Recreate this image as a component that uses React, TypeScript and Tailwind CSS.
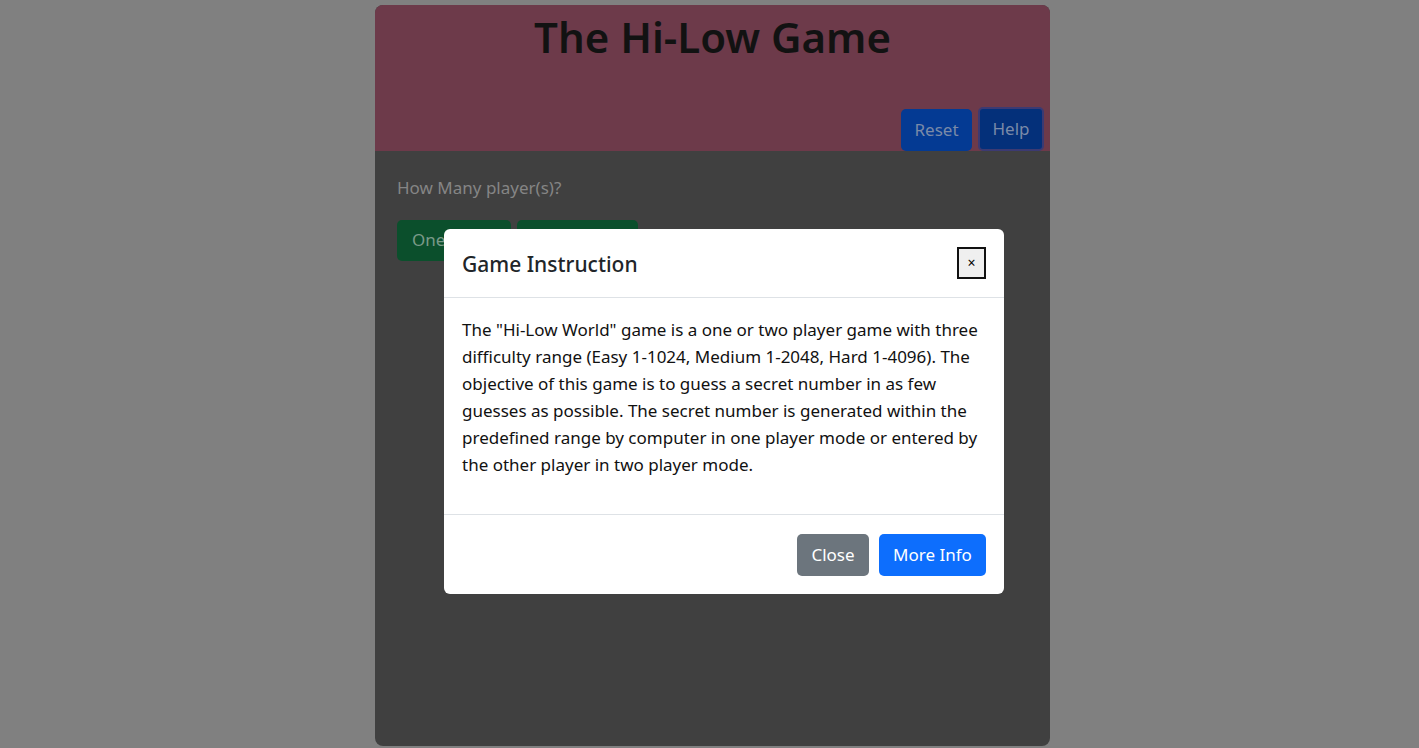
export default function App() {
  const font = { fontFamily: '"Noto Sans", "Open Sans", sans-serif' };
  return (
    <div className="min-h-screen w-full bg-[#808080]" style={font}>
      <div className="ml-[375px] w-[675px] pt-[5px]">
        <div className="flex h-[741px] flex-col overflow-hidden rounded-lg bg-[#404040]">
          {/* header */}
          <div className="flex h-[146px] flex-col bg-[#6d3a4a]">
            <h1 className="mt-[7px] text-center text-[42px] font-semibold leading-[50px] text-[#121212]">
              The Hi-Low Game
            </h1>
            <div className="mt-auto flex justify-end gap-[6px] pr-[6px]">
              <button className="h-[42px] w-[71px] rounded-[5px] bg-[#043a93] text-[17px] text-[#7a8aa8]">Reset</button>
              <button className="mt-[-2px] h-[44px] w-[66px] rounded-[5px] border-2 border-[#3c3a72] bg-[#04307a] text-[17px] text-[#7a8aa8]">
                Help
              </button>
            </div>
          </div>
          {/* body */}
          <div className="px-[22px] pt-[24px]">
            <div className="text-[17px] text-[#858585]">How Many player(s)?</div>
            <div className="mt-[19px] flex gap-[6px]">
              <button className="h-[41px] w-[114px] whitespace-nowrap rounded-[5px] bg-[#0b4f2c] px-[15px] text-left text-[17px] text-[#7a9a88]">
                One Player
              </button>
              <button className="h-[41px] w-[121px] whitespace-nowrap rounded-[5px] bg-[#0b4f2c] px-[15px] text-left text-[17px] text-[#7a9a88]">
                Two Players
              </button>
            </div>
          </div>
        </div>
      </div>

      {/* modal */}
      <div className="fixed left-[444px] top-[229px] w-[560px] rounded-[6px] bg-white text-[#212529]">
        <div className="flex h-[69px] items-center justify-between border-b border-[#dee2e6] px-[18px]">
          <h5 className="mt-[3px] text-[21px] font-medium">Game Instruction</h5>
          <button className="flex h-[32px] w-[29px] items-center justify-center border-2 border-[#111] bg-[#efefef] text-[14px] leading-none text-black">
            ×
          </button>
        </div>
        <div className="h-[217px] border-b border-[#dee2e6] px-[18px] pt-[18px]">
          <p className="text-[17px] leading-[27px] text-[#111]">
            The "Hi-Low World" game is a one or two player game with three difficulty range (Easy 1-1024, Medium 1-2048,
            Hard 1-4096). The objective of this game is to guess a secret number in as few guesses as possible. The secret
            number is generated within the predefined range by computer in one player mode or entered by the other player in
            two player mode.
          </p>
        </div>
        <div className="flex h-[79px] items-center justify-end gap-[10px] px-[18px]">
          <button className="h-[42px] w-[72px] rounded-[5px] bg-[#6c757d] text-[17px] text-white">Close</button>
          <button className="h-[42px] w-[107px] rounded-[5px] bg-[#0d6efd] text-[17px] text-white">More Info</button>
        </div>
      </div>
    </div>
  );
}
